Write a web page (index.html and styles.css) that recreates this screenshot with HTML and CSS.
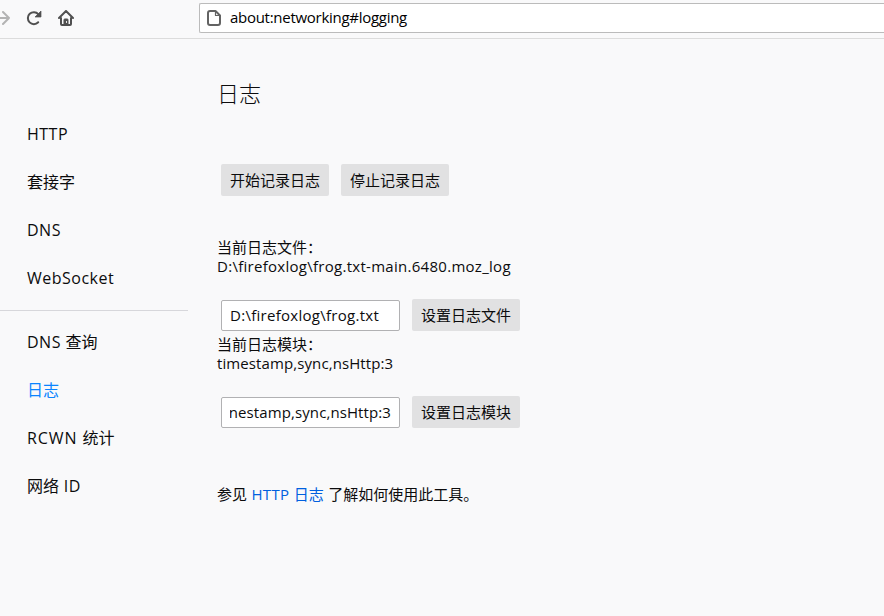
FILE: index.html
```html
<!DOCTYPE html>
<html lang="zh-CN">
<head>
<meta charset="utf-8">
<title>about:networking</title>
<link rel="stylesheet" href="styles.css">
</head>
<body>
<header class="toolbar">
  <nav class="nav-buttons">
    <svg class="forward" width="11" height="18" viewBox="0 0 11 18" fill="none" stroke="#b3b3b3" stroke-width="2" stroke-linecap="round" stroke-linejoin="round"><path d="M-4 9H9M3 3l6 6-6 6"/></svg>
    <svg class="reload" width="16" height="16" viewBox="0 0 16 16"><path d="M12.2 12.300A6 6 0 1 1 12.300 4.100" fill="none" stroke="#505050" stroke-width="2" stroke-linecap="round"/><path d="M15 1v6H9z" fill="#505050" stroke="#505050" stroke-width=".7" stroke-linejoin="round"/></svg>
    <svg class="home" width="16" height="16" viewBox="0 0 16 16" fill="none" stroke="#505050" stroke-width="2" stroke-linecap="round" stroke-linejoin="round"><path d="M1 8l7-7 7 7M3 8v6q0 1 1 1h8q1 0 1-1V8"/><path d="M6 15v-5.300q0-.7.700-.700h2.600q.7 0 .7.700V15z" fill="#505050" stroke-width="1"/><path d="M8.500 11.500v1" stroke="#f9f9fa" stroke-width="1"/></svg>
  </nav>
  <div class="urlbar">
    <svg width="14" height="16" viewBox="0 0 14 16" fill="none" stroke="#636363" stroke-width="2" stroke-linejoin="round"><path d="M3 1h5.500L13 5.500V13q0 2-2 2H3q-2 0-2-2V3q0-2 2-2z"/><path d="M8.500 1v4.500H13" stroke-width="1.200"/></svg>
    <span class="url">about:networking#logging</span>
  </div>
</header>
<div class="page">
  <aside class="sidebar">
    <ul class="group">
      <li class="latin">HTTP</li>
      <li>套接字</li>
      <li class="latin">DNS</li>
      <li class="latin">WebSocket</li>
    </ul>
    <ul class="group">
      <li><span class="latin">DNS </span>查询</li>
      <li class="active">日志</li>
      <li><span class="latin wide">RCWN </span>统计</li>
      <li>网络<span class="latin"> ID</span></li>
    </ul>
  </aside>
  <main class="content">
    <h1>日志</h1>
    <div class="row">
      <button>开始记录日志</button>
      <button>停止记录日志</button>
    </div>
    <div class="current file">
      <div>当前日志文件：</div>
      <div><span class="path">D:\firefoxlog\frog.txt-main.6480.moz_log</span></div>
    </div>
    <div class="row">
      <div class="field"><span class="path">D:\firefoxlog\frog.txt</span></div>
      <button>设置日志文件</button>
    </div>
    <div class="current modules">
      <div>当前日志模块：</div>
      <div><span class="mods">timestamp,sync,nsHttp:3</span></div>
    </div>
    <div class="row">
      <div class="field"><div class="clip"><span class="mods">nestamp,sync,nsHttp:3</span></div></div>
      <button>设置日志模块</button>
    </div>
    <p class="help">参见 <a><span class="protocol">HTTP</span> 日志</a> 了解如何使用此工具。</p>
  </main>
</div>
</body>
</html>
```
FILE: styles.css
```css
* { box-sizing: border-box; }
body {
  margin: 0;
  height: 616px;
  overflow: hidden;
  background: #f9f9fa;
  color: #0c0c0d;
  font: 15px/20px "Open Sans", "Noto Sans CJK SC", sans-serif;
}
.toolbar {
  display: flex;
  height: 39px;
  border-bottom: 1px solid #dcdcdc;
}
.nav-buttons {
  display: flex;
  align-items: center;
  width: 199px;
  height: 36px;
  flex: none;
}
.reload { margin-left: 15px; }
.home { margin-left: 16px; }
.urlbar {
  display: flex;
  align-items: center;
  flex: 1;
  height: 30px;
  margin-top: 3px;
  padding-left: 7px;
  background: #fff;
  border: 1px solid #bbb;
  border-right: 0;
  border-radius: 2px 0 0 2px;
}
.url { margin-left: 9px; padding-bottom: 2px; color: #000; letter-spacing: -.28px; white-space: nowrap; }
.page { display: flex; }
.sidebar { width: 188px; padding-top: 71px; flex: none; font-size: 16px; }
.group { list-style: none; margin: 0; padding: 0; }
.group + .group {
  margin-top: 8px;
  padding-top: 7px;
  border-top: 1px solid #d7d7db;
}
.group li { height: 48px; padding-left: 27px; line-height: 48px; white-space: nowrap; }
.group .active { color: #0a84ff; }
.latin { letter-spacing: .5px; }
.wide { letter-spacing: .9px; }
.protocol { letter-spacing: .3px; }
.path { letter-spacing: .28px; }
.mods { letter-spacing: .1px; }
.content { padding: 38px 0 0 29px; white-space: nowrap; }
h1 { margin: 0; font-size: 22px; line-height: 33px; font-weight: 300; }
.row { display: flex; gap: 12px; padding-left: 4px; }
h1 + .row { margin-top: 54px; }
button {
  width: 108px;
  height: 32px;
  padding: 0;
  border: 0;
  border-radius: 2px;
  background: #e1e1e2;
  color: #0c0c0d;
  font: inherit;
}
.current { line-height: 19px; }
.file { margin: 42px 0 23px; }
.modules { margin: 4px 0 23px; }
.field {
  display: flex;
  align-items: center;
  width: 179px;
  height: 31px;
  margin-top: 1px;
  padding: 0 8px 2px;
  border: 1px solid #b1b1b3;
  border-radius: 2px;
  background: #fff;
}
.clip { display: flex; flex: 1; min-width: 0; justify-content: flex-end; overflow: hidden; }
.help { margin: 56px 0 0; word-spacing: .6px; }
.help a { color: #0060df; }
```
